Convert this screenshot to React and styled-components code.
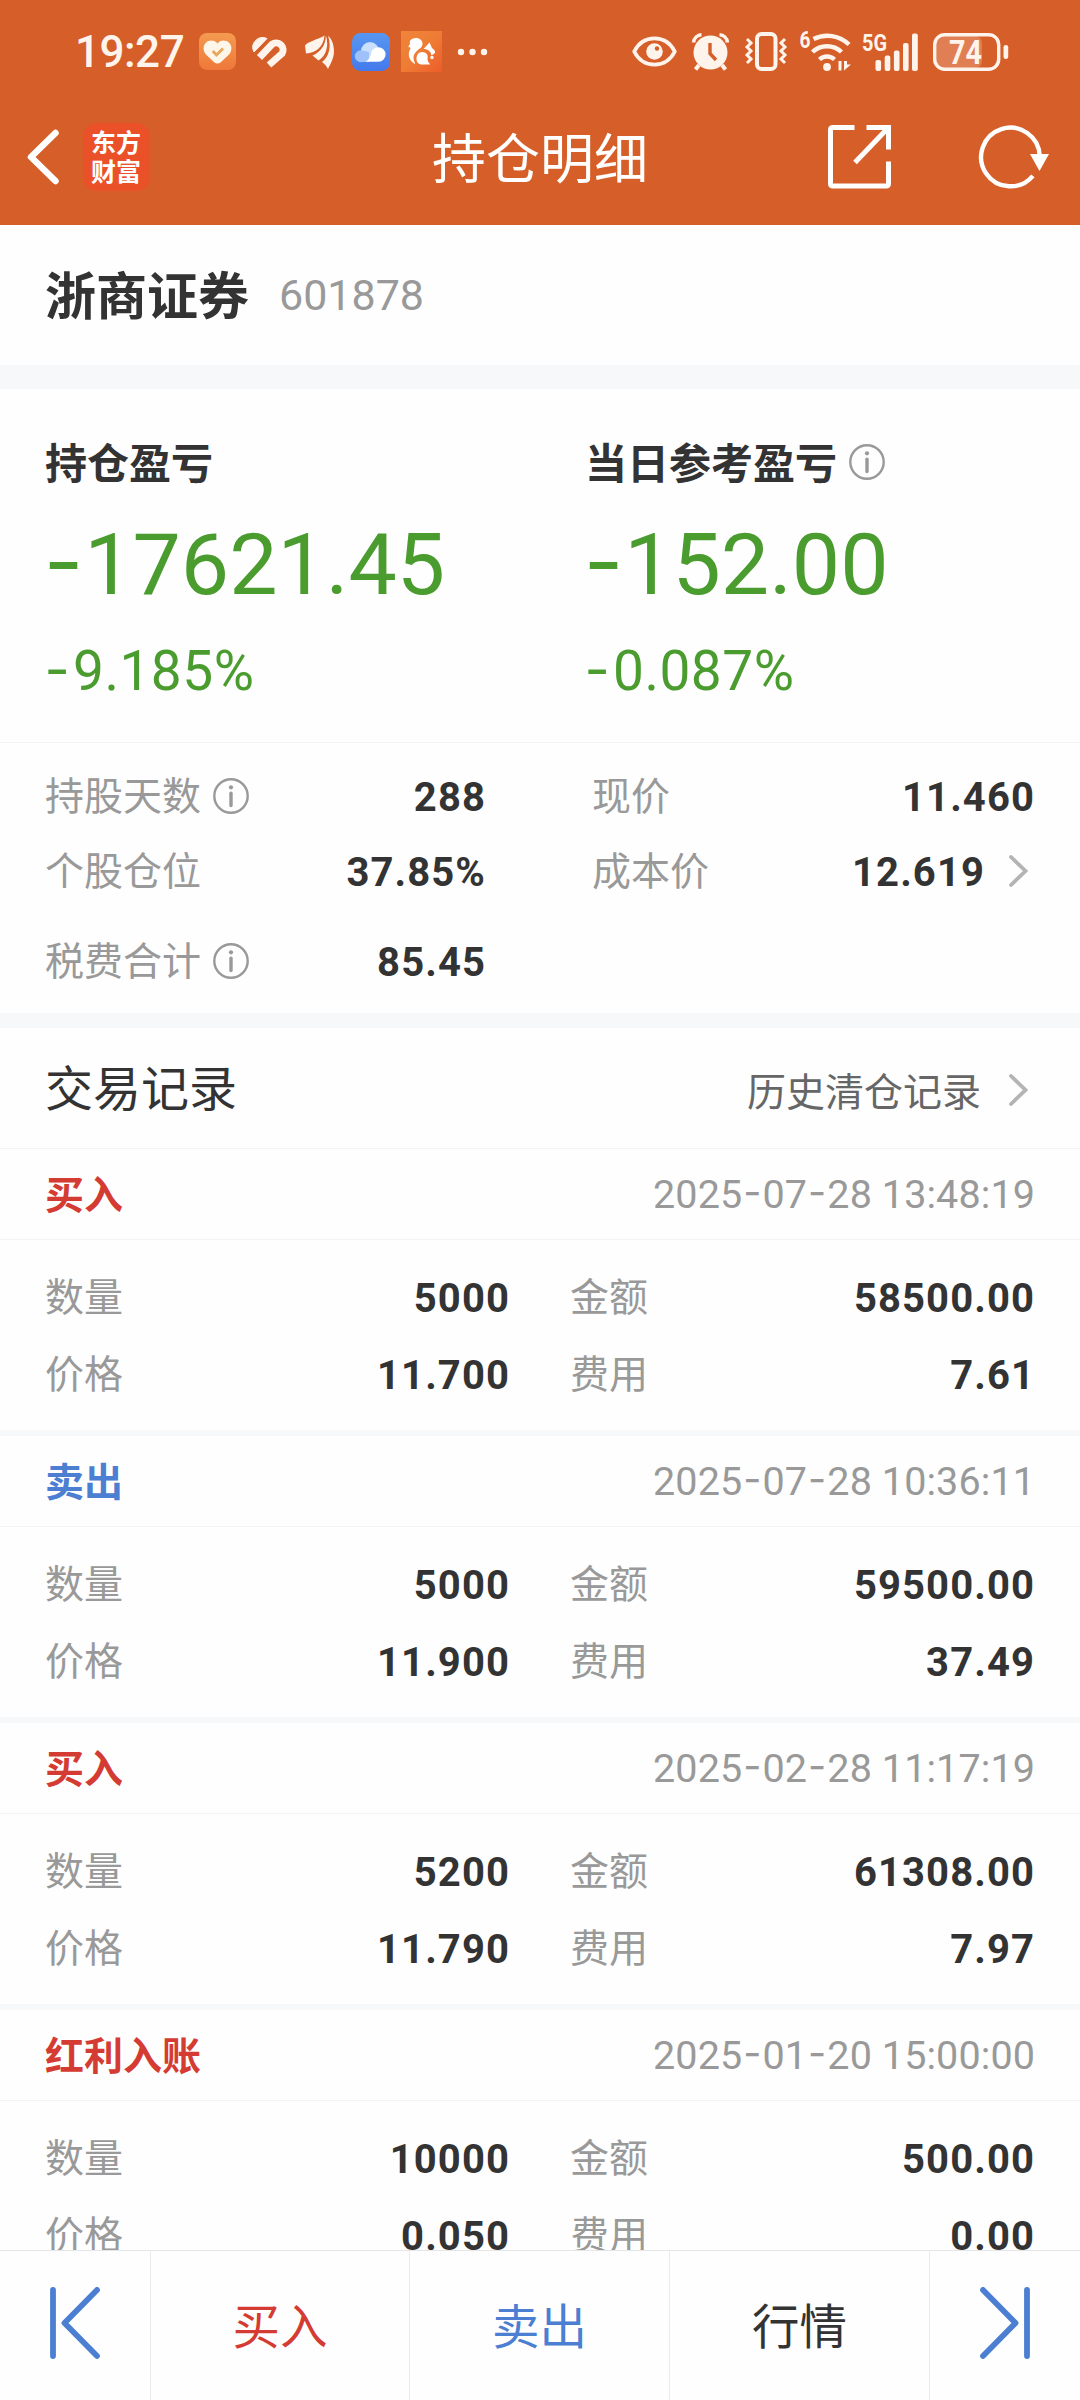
import React, { Component } from 'react'
import styled, { createGlobalStyle, css } from 'styled-components'

const COLORS = {
    brand: '#d65e28',
    text: '#333333',
    sub: '#666666',
    label: '#999999',
    green: '#4a9c2e',
    red: '#d43c33',
    blue: '#4c7fd2',
    band: '#f6f8fa',
    line: '#f3f4f5',
}

const summary = [
    { title: '持仓盈亏', amount: '-17621.45', percent: '-9.185%' },
    { title: '当日参考盈亏', amount: '-152.00', percent: '-0.087%', info: true },
]

const details = [
    [
        { label: '持股天数', value: '288', info: true },
        { label: '现价', value: '11.460' },
    ],
    [
        { label: '个股仓位', value: '37.85%' },
        { label: '成本价', value: '12.619', link: true },
    ],
    [
        { label: '税费合计', value: '85.45', info: true },
    ],
]

const records = [
    { type: '买入', color: COLORS.red, time: '2025-07-28 13:48:19', count: '5000', price: '11.700', amount: '58500.00', fee: '7.61' },
    { type: '卖出', color: COLORS.blue, time: '2025-07-28 10:36:11', count: '5000', price: '11.900', amount: '59500.00', fee: '37.49' },
    { type: '买入', color: COLORS.red, time: '2025-02-28 11:17:19', count: '5200', price: '11.790', amount: '61308.00', fee: '7.97' },
    { type: '红利入账', color: COLORS.red, time: '2025-01-20 15:00:00', count: '10000', price: '0.050', amount: '500.00', fee: '0.00' },
]

// Inter has the wide hyphen, Roboto has the digits
const Digits = ({ children }) => (
    <>
        {children.split(/(-)/).map((part, k) => part === '-' ? <Dash key={k}>-</Dash> : part)}
    </>
)

const InfoIcon = () => (
    <svg width="36" height="36" viewBox="0 0 36 36" fill="none" stroke={COLORS.label}>
        <circle cx="18" cy="18" r="16.7" strokeWidth="2.4" />
        <circle cx="18" cy="9.3" r="2.1" fill={COLORS.label} stroke="none" />
        <path d="M18 15.3V27.5" strokeWidth="3.4" strokeLinecap="round" />
    </svg>
)

const MoreIcon = () => (
    <svg width="19" height="32" viewBox="0 0 19 32" fill="none" stroke="#b4b4b4" strokeWidth="3.8" strokeLinecap="round">
        <path d="M2 2L16.5 16L2 30" />
    </svg>
)

const StatusIcons = () => (
    <>
        <Glyph $left={15} width="37" height="37" viewBox="0 0 37 37">
            <defs>
                <linearGradient id="health" x1="0" y1="0" x2="0" y2="1">
                    <stop offset="0" stopColor="#f49b50" />
                    <stop offset="1" stopColor="#ee7839" />
                </linearGradient>
            </defs>
            <rect width="37" height="37" rx="8" fill="url(#health)" />
            <path d="M18.5 10.5C21 7 27 6.5 30.3 10C33.5 13.5 32.8 18 30 21.5L21.8 29.3C19.8 31 17.2 31 15.2 29.3L7 21.5C4.2 18 3.5 13.5 6.7 10C10 6.5 16 7 18.5 10.5Z" fill="#fff6ea" />
            <path d="M13.8 18L17.5 22L24 15.5" fill="none" stroke="#e9a75c" strokeWidth="2.9" />
        </Glyph>
        <Glyph $left={15} width="36" height="31" viewBox="0 0 36 31">
            <path d="M3 16A9.8 9.8 0 0 1 16 2.6L3 16Z" fill="#fff4ec" stroke="#fff4ec" strokeWidth="1" />
            <path d="M8.5 21.5L21 8.3A6.9 6.9 0 0 1 31 17.5L18 29" fill="none" stroke="#fff4ec" strokeWidth="7" />
        </Glyph>
        <Glyph $left={18} width="29" height="34" viewBox="0 0 29 34" fill="#fff4ec">
            <path d="M19.5 0.5C13 4.5 3 6.5 0 10.5L1 18.5C11 17.5 18.5 12 19.5 0.5Z" />
            <path d="M20.9 0.5C20.5 11 15 17.5 7.5 20.5L13.5 25.5C21 21 24.3 11 20.9 0.5Z" />
            <path d="M23 0.8C28 5 29 12 29 17.5C28.5 24 25.5 29 23 34C21.5 31 20 29.5 17 27C24.5 21.5 26.5 11 23 0.8Z" />
        </Glyph>
        <Glyph $left={17.5} width="38" height="38" viewBox="0 0 38 38">
            <defs>
                <linearGradient id="cloud" x1="0" y1="0" x2="0" y2="1">
                    <stop offset="0" stopColor="#5897f1" />
                    <stop offset="1" stopColor="#4479ec" />
                </linearGradient>
            </defs>
            <rect width="38" height="38" rx="8.5" fill="url(#cloud)" />
            <circle cx="18" cy="18" r="9" fill="#c9dffc" />
            <path d="M10 17.5A5.9 5.9 0 1 0 10 29H17V19Z" fill="#9dc1f8" />
            <path d="M14 28.5C16 27.5 17.5 25 19 21.5A7.3 7.3 0 1 1 26.5 28.8H14Z" fill="#ffffff" />
        </Glyph>
        <Glyph $left={11.5} width="41" height="41" viewBox="0 0 41 41">
            <defs>
                <linearGradient id="squirrel" x1="0" y1="0" x2="1" y2="1">
                    <stop offset="0" stopColor="#f0853a" />
                    <stop offset="0.5" stopColor="#ee7c34" />
                    <stop offset="1" stopColor="#ed5c2b" />
                </linearGradient>
            </defs>
            <rect width="41" height="41" fill="url(#squirrel)" />
            <path d="M9 13C8 9 11 7 16 7C21 8 23 12 20.5 16C17 19 12.5 22 12.5 27C12.5 30 14.5 32 14 33C10 31 7 26 8 21C9 18 11 16.5 7.5 16C7.5 14.5 8.5 14 9 13Z" fill="#ffffff" />
            <path d="M22.5 18L28.5 11.5L31 17C33 18.5 34.5 20 34 22L30.5 24.5C30 20.5 27 18 22.5 18Z" fill="#ffffff" />
            <path d="M15.5 28C15.5 24 17.5 21 21 21C25.5 21 27.5 24 26.5 28C26.5 31 28.5 31.5 29 33.5H20C17 33 15.5 31 15.5 28Z" fill="#ffffff" />
            <circle cx="31" cy="26.5" r="1.7" fill="#ffffff" />
        </Glyph>
        <Glyph $left={15} width="31" height="8" viewBox="0 0 31 8" fill="#fff4ec">
            <circle cx="4" cy="4" r="3.2" />
            <circle cx="15.5" cy="4" r="3.2" />
            <circle cx="27" cy="4" r="3.2" />
        </Glyph>
        <Spacer />
        <Glyph width="45" height="31" viewBox="0 0 45 31" fill="none" stroke="#fff4ec">
            <path d="M2.2 15.5C6 8 13 2.4 22.5 2.4S39 8 42.8 15.5C39 23 32 28.6 22.5 28.6S6 23 2.2 15.5Z" strokeWidth="3.8" strokeLinejoin="round" />
            <circle cx="22.5" cy="15.5" r="8.3" fill="#fff4ec" stroke="none" />
            <circle cx="25" cy="12.5" r="2.2" fill={COLORS.brand} stroke="none" />
        </Glyph>
        <Glyph $left={15} width="37" height="38" viewBox="0 0 37 38" fill="none" stroke="#fff4ec">
            <circle cx="18.5" cy="19.5" r="17" fill="#fff4ec" stroke="none" />
            <path d="M1.5 9.5C2 5 5.5 2 9.5 1.8M27.5 1.8C31.5 2 35 5 35.5 9.5" strokeWidth="3.6" />
            <path d="M7 32L3.5 36.5M30 32L33.5 36.5" strokeWidth="4" />
            <path d="M18 10V20.5L24 27" stroke={COLORS.brand} strokeWidth="3.4" />
        </Glyph>
        <Glyph $left={16} width="42" height="39" viewBox="0 0 42 39" fill="none" stroke="#fff4ec">
            <rect x="12" y="2" width="18.5" height="35" rx="4.5" strokeWidth="4" />
            <path d="M2 7L6 11L2 15L6 19L2 23L6 27L2 31M40 7L36 11L40 15L36 19L40 23L36 27L40 31" strokeWidth="3" />
        </Glyph>
        <Glyph $left={13} width="51" height="41" viewBox="0 0 51 41" fill="none" stroke="#fff4ec" strokeWidth="4.4">
            <SvgText x="-0.5" y="17" fontSize="24" textLength="11">6</SvgText>
            <path d="M13.5 8A31 31 0 0 1 49 13.5M12.5 21A21 21 0 0 1 41.5 21M19.5 28.5A11 11 0 0 1 34.5 28.5" />
            <circle cx="27" cy="36" r="3.9" fill="#fff4ec" stroke="none" />
            <path d="M33 36.5L38.5 30V39.5H41.5V30H38.5L33 36.5ZM44 30V39.5L51 33.5H47V30H44Z" fill="#fff4ec" stroke="none" />
        </Glyph>
        <Glyph $left={11} width="57" height="38" viewBox="0 0 57 38" fill="#fff4ec">
            <SvgText x="0" y="17.5" fontSize="24" textLength="25">5G</SvgText>
            <rect x="13.5" y="27" width="5.6" height="11" rx="2" />
            <rect x="22.7" y="22.5" width="5.6" height="15.5" rx="2" />
            <rect x="31.9" y="17.5" width="5.6" height="20.5" rx="2" />
            <rect x="41" y="10" width="5.6" height="28" rx="2" />
            <rect x="50" y="0.5" width="5.8" height="37.5" rx="2" />
        </Glyph>
        <Glyph $left={14.5} width="76" height="38" viewBox="0 0 76 38">
            <rect x="3" y="3" width="46" height="32" rx="7" fill="#fff4ec" fillOpacity="0.22" />
            <rect x="1.7" y="1.7" width="64" height="34.6" rx="10" fill="none" stroke="#fff4ec" strokeWidth="3.4" />
            <rect x="70.5" y="12" width="4.7" height="14" rx="2.3" fill="#fff4ec" />
            <SvgText x="16" y="31" fontSize="33" textLength="33">74</SvgText>
        </Glyph>
    </>
)

const Detail = ({ label, value, info, link }) => (
    <DetailCell>
        <Label><span>{label}</span>{info && <InfoIcon />}</Label>
        <Value>
            <span>{value}</span>
            {link && <MoreIcon />}
        </Value>
    </DetailCell>
)

const RecordField = ({ label, value }) => (
    <Pair>
        <Label><span>{label}</span></Label>
        <Value><span>{value}</span></Value>
    </Pair>
)

const RecordItem = ({ record }) => (
    <RecordBox>
        <RecordHead>
            <RecordType $color={record.color}>{record.type}</RecordType>
            <RecordTime><Digits>{record.time}</Digits></RecordTime>
        </RecordHead>
        <RecordBody>
            <RecordField label="数量" value={record.count} />
            <RecordField label="金额" value={record.amount} />
            <RecordField label="价格" value={record.price} />
            <RecordField label="费用" value={record.fee} />
        </RecordBody>
    </RecordBox>
)

class App extends Component {
    render() {
        return (
            <Page>
                <GlobalStyle />
                <Header>
                    <StatusBar>
                        <Clock>19:27</Clock>
                        <StatusIcons />
                    </StatusBar>
                    <NavBar>
                        <NavSide>
                            <svg width="33" height="56" viewBox="0 0 33 56" fill="none" stroke="#ffffff" strokeWidth="6.5" strokeLinecap="round" strokeLinejoin="round">
                                <path d="M29.5 4L5 28L29.5 52" />
                            </svg>
                            <Logo>东方财富</Logo>
                        </NavSide>
                        <NavTitle>持仓明细</NavTitle>
                        <NavSide $end>
                            <svg width="64" height="64" viewBox="0 0 64 64" fill="none" stroke="#ffffff" strokeWidth="5">
                                <path d="M26.5 2.5H5Q2.5 2.5 2.5 5V58.5Q2.5 61 5 61H58Q60.5 61 60.5 58.5V36.5M38.5 2.5H60.5V24.5M60 3L27 37.5" />
                            </svg>
                            <svg width="72" height="64" viewBox="0 0 72 64" fill="none" stroke="#ffffff" strokeWidth="4.4">
                                <path d="M54.9 50.8A29.3 29.3 0 1 1 61.7 31" />
                                <path d="M52 29H71L61.5 46Z" fill="#ffffff" stroke="none" />
                            </svg>
                        </NavSide>
                    </NavBar>
                </Header>

                <Stock>
                    <StockName>浙商证券</StockName>
                    <StockCode>601878</StockCode>
                </Stock>
                <Band $size={24} />

                <Summary>
                    {summary.map((item, k) => (
                        <SummaryCol key={k}>
                            <SummaryTitle><span>{item.title}</span>{item.info && <InfoIcon />}</SummaryTitle>
                            <SummaryAmount><Digits>{item.amount}</Digits></SummaryAmount>
                            <SummaryPercent><Digits>{item.percent}</Digits></SummaryPercent>
                        </SummaryCol>
                    ))}
                </Summary>

                <Details>
                    {details.map((row, k) => (
                        <DetailRow key={k}>
                            {row.map(item => <Detail key={item.label} {...item} />)}
                        </DetailRow>
                    ))}
                </Details>
                <Band $size={15} />

                <SectionHead>
                    <SectionTitle>交易记录</SectionTitle>
                    <SectionLink><span>历史清仓记录</span><MoreIcon /></SectionLink>
                </SectionHead>
                <RecordList>
                    {records.map(record => <RecordItem key={record.time} record={record} />)}
                </RecordList>

                <Footer>
                    <FooterCell>
                        <svg width="50" height="72" viewBox="0 0 50 72" fill="none" stroke={COLORS.blue} strokeWidth="5.8" strokeLinecap="round" strokeLinejoin="round">
                            <path d="M3 3V69M47 3L14.5 36L47 69" />
                        </svg>
                    </FooterCell>
                    <FooterCell $color={COLORS.red}>买入</FooterCell>
                    <FooterCell $color={COLORS.blue}>卖出</FooterCell>
                    <FooterCell>行情</FooterCell>
                    <FooterCell>
                        <svg width="50" height="72" viewBox="0 0 50 72" fill="none" stroke={COLORS.blue} strokeWidth="5.8" strokeLinecap="round" strokeLinejoin="round">
                            <path d="M47 3V69M3 3L35.5 36L3 69" />
                        </svg>
                    </FooterCell>
                </Footer>
            </Page>
        )
    }
}


const GlobalStyle = createGlobalStyle`
	* {
		box-sizing: border-box;
	}
	body {
		margin: 0;
		background: #fefefe;
	}
	svg {
		display: block;
		flex-shrink: 0;
	}
`

const digits = css`
	font-family: Roboto, 'Noto Sans CJK SC', sans-serif;
`

const Page = styled.div`
	display: flex;
	flex-direction: column;
	width: 1080px;
	height: 2400px;
	overflow: hidden;
	color: ${COLORS.text};
	font-family: 'Noto Sans CJK SC', sans-serif;
	white-space: nowrap;
`

const Dash = styled.span`
	font-family: Inter, sans-serif;
	line-height: 1;
	margin: 0 0.025em;
	vertical-align: 0.027em;
`

const Header = styled.div`
	height: 225px;
	flex-shrink: 0;
	background: ${COLORS.brand};
	color: #ffffff;
`

const StatusBar = styled.div`
	display: flex;
	align-items: center;
	height: 103px;
	padding: 0 71px 0 75px;
`

const Clock = styled.div`
	${digits}
	width: 109px;
	font-size: 44px;
	font-weight: 500;
	letter-spacing: -0.5px;
	color: #fff4ec;
`

const Glyph = styled.svg`
	margin-left: ${props => props.$left || 0}px;
	overflow: visible;
`

const SvgText = styled.text.attrs({ lengthAdjust: 'spacingAndGlyphs' })`
	${digits}
	font-weight: 700;
	fill: #fff4ec;
	stroke: none;
`

const Spacer = styled.div`
	flex: 1;
`

const NavBar = styled.div`
	display: flex;
	align-items: center;
	height: 108px;
	padding: 0 30px 0 26px;
`

const NavSide = styled.div`
	display: flex;
	flex: 1;
	align-items: center;
	justify-content: ${props => props.$end ? 'flex-end' : 'flex-start'};
	gap: ${props => props.$end ? 86 : 24}px;
`

const NavTitle = styled.div`
	padding: 0 0 2px 4px;
	font-size: 54px;
	line-height: 80px;
`

const Logo = styled.div`
	width: 67px;
	height: 68px;
	padding: 4px 8px;
	border-radius: 14px;
	background: #eb5129;
	font-size: 25px;
	font-weight: 700;
	line-height: 29px;
	white-space: normal;
	word-break: break-all;
`

const Stock = styled.div`
	display: flex;
	align-items: center;
	height: 140px;
	flex-shrink: 0;
	padding: 0 45px;
	gap: 30px;
`

const StockName = styled.div`
	padding-bottom: 5px;
	font-size: 51px;
	font-weight: 700;
`

const StockCode = styled.div`
	${digits}
	font-size: 43px;
	color: ${COLORS.label};
`

const Band = styled.div`
	height: ${props => props.$size}px;
	flex-shrink: 0;
	background: ${COLORS.band};
`

const Summary = styled.div`
	display: grid;
	grid-template-columns: 1fr 1fr;
	height: 354px;
	flex-shrink: 0;
	padding-top: 43px;
	border-bottom: 1px solid ${COLORS.line};
`

const SummaryCol = styled.div`
	padding-left: 45px;
`

const SummaryTitle = styled.div`
	display: flex;
	align-items: center;
	gap: 12px;
	height: 60px;
	font-size: 42px;
	font-weight: 700;

	span {
		padding-bottom: 4px;
	}
`

const SummaryAmount = styled.div`
	${digits}
	height: 141px;
	padding-top: 3px;
	font-size: 86px;
	line-height: 140px;
	color: ${COLORS.green};

	${Dash} {
		margin: 0 0.01em 0 -0.015em;
	}
`

const SummaryPercent = styled.div`
	${digits}
	height: 76px;
	font-size: 55px;
	line-height: 76px;
	letter-spacing: 0.5px;
	color: ${COLORS.green};

	${Dash} {
		margin: 0 0.05em 0 -0.01em;
	}
`

const Details = styled.div`
	height: 270px;
	flex-shrink: 0;
	padding-top: 15px;
`

const DetailRow = styled.div`
	display: grid;
	grid-template-columns: 441px 443px;
	column-gap: 106px;
	padding-left: 45px;
	height: 75px;

	&:last-child {
		height: 105px;
	}
`

const DetailCell = styled.div`
	display: flex;
	align-items: center;
	justify-content: space-between;
`

const Label = styled.div`
	display: flex;
	align-items: center;
	gap: 12px;
	font-size: 39px;
	color: ${COLORS.label};

	span {
		padding-bottom: 5px;
	}
`

const Value = styled.div`
	${digits}
	display: flex;
	align-items: center;
	font-size: 40px;
	font-weight: 700;
	letter-spacing: 1.1px;

	span {
		padding-top: 3px;
	}

	svg {
		margin: 0 7px 0 24px;
	}
`

const SectionHead = styled.div`
	display: flex;
	align-items: center;
	justify-content: space-between;
	height: 121px;
	flex-shrink: 0;
	padding: 0 52px 0 45px;
	border-bottom: 1px solid ${COLORS.line};
`

const SectionTitle = styled.div`
	padding-bottom: 7px;
	font-size: 48px;
`

const SectionLink = styled.div`
	display: flex;
	align-items: center;
	gap: 28px;
	padding-top: 3px;
	font-size: 39px;
	color: ${COLORS.sub};

	span {
		padding-bottom: 2px;
	}
`

const RecordList = styled.div`
	flex: 1;
	min-height: 0;
	overflow: hidden;
`

const RecordBox = styled.div`
	height: 287px;
	border-bottom: 6px solid ${COLORS.band};
`

const RecordHead = styled.div`
	display: flex;
	align-items: center;
	justify-content: space-between;
	height: 91px;
	padding: 0 45px;
	border-bottom: 1px solid ${COLORS.line};
`

const RecordType = styled.div`
	padding-bottom: 4px;
	font-size: 39px;
	font-weight: 700;
	color: ${props => props.$color};
`

const RecordTime = styled.div`
	${digits}
	font-size: 39.5px;
	letter-spacing: 0.1px;
	color: ${COLORS.label};
`

const RecordBody = styled.div`
	display: grid;
	grid-template-columns: 465px 465px;
	grid-auto-rows: 77px;
	column-gap: 60px;
	padding: 18px 45px;
`

const Pair = styled.div`
	display: flex;
	align-items: center;
	justify-content: space-between;
`

const Footer = styled.div`
	display: grid;
	grid-template-columns: 150px 259px 260px 260px 151px;
	height: 150px;
	flex-shrink: 0;
	border-top: 1px solid #e6e6e6;
	background: #fefefe;
`

const FooterCell = styled.div`
	display: flex;
	align-items: center;
	justify-content: center;
	padding-bottom: 5px;
	font-size: 47.5px;
	color: ${props => props.$color || COLORS.text};

	& + & {
		border-left: 1px solid #ebebeb;
	}
`

export default App
